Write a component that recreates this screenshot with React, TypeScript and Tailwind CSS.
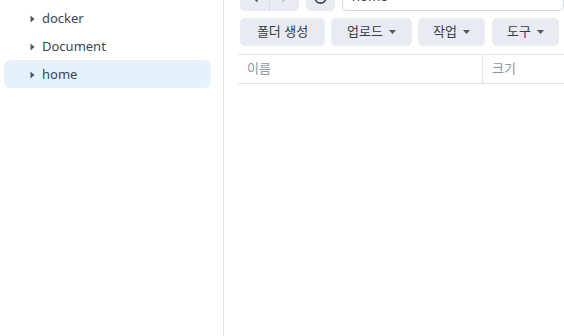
import { ChevronLeft, ChevronRight, RotateCw } from "lucide-react"

const folders = ["docker", "Document", "home"]

const Caret = () => (
  <svg width="5" height="8" viewBox="0 0 5 8" className="shrink-0">
    <path d="M0.5 0.5 L4.5 4 L0.5 7.5 Z" fill="#4d5661" />
  </svg>
)

const DownCaret = () => (
  <svg width="7" height="4" viewBox="0 0 7 4" className="ml-1.5 shrink-0">
    <path d="M0 0 L7 0 L3.5 4 Z" fill="#4d5661" />
  </svg>
)

const ToolButton = ({ label, menu, width }: { label: string; menu?: boolean; width: string }) => (
  <button
    className={`h-[28px] ${width} flex items-center justify-center rounded-[5px] bg-[#e8ecf2] text-[13px] text-[#333d48]`}
  >
    {label}
    {menu && <DownCaret />}
  </button>
)

export default function App() {
  return (
    <div
      className="h-[336px] w-[564px] flex overflow-hidden bg-white"
      style={{ fontFamily: '"Noto Sans", "Noto Sans CJK KR", sans-serif' }}
    >
      <aside className="w-[224px] shrink-0 border-r border-[#e3e3e3] pt-1 pl-1 pr-3">
        {folders.map((name) => (
          <div
            key={name}
            className={`h-[28px] flex items-center gap-[7px] pl-[26px] pt-px rounded-[6px] text-[13px] text-[#3b4550] ${
              name === "home" ? "bg-[#e5f1fd]" : ""
            }`}
          >
            <Caret />
            <span>{name}</span>
          </div>
        ))}
      </aside>

      <main className="flex-1 min-w-0 -mt-[17px] pl-[14px]">
        <div className="flex items-center gap-[7px] h-[28px] pl-0.5">
          <div className="flex h-[28px] w-[59px] rounded-[5px] bg-[#e8ecf2]">
            <div className="flex-1 flex items-center justify-center border-r border-[#d3d9e0]">
              <ChevronLeft size={16} strokeWidth={2.5} color="#3b4550" />
            </div>
            <div className="flex-1 flex items-center justify-center">
              <ChevronRight size={16} strokeWidth={2.5} color="#b5bcc4" />
            </div>
          </div>
          <div className="flex h-[28px] w-[29px] items-center justify-center rounded-[5px] bg-[#e8ecf2]">
            <RotateCw size={15} strokeWidth={2.5} color="#3b4550" />
          </div>
          <div className="flex-1 h-[28px] flex items-center rounded-[5px] border border-[#d3d9e0] pl-[9px] text-[13px] text-[#333d48] whitespace-nowrap">
            home
          </div>
        </div>

        <div className="flex gap-[6px] mt-[7px] pl-0.5 whitespace-nowrap">
          <ToolButton label="폴더 생성" width="w-[85px]" />
          <ToolButton label="업로드" menu width="w-[81px]" />
          <ToolButton label="작업" menu width="w-[67px]" />
          <ToolButton label="도구" menu width="w-[67px] ml-px" />
        </div>

        <div className="mt-[8px] flex h-[30px] border-y border-[#dde3ea] text-[13px] text-[#8b96a2]">
          <div className="w-[245px] flex items-center pl-[9px] border-r border-[#dde3ea]">이름</div>
          <div className="flex-1 flex items-center pl-[9px]">크기</div>
        </div>
      </main>
    </div>
  )
}
